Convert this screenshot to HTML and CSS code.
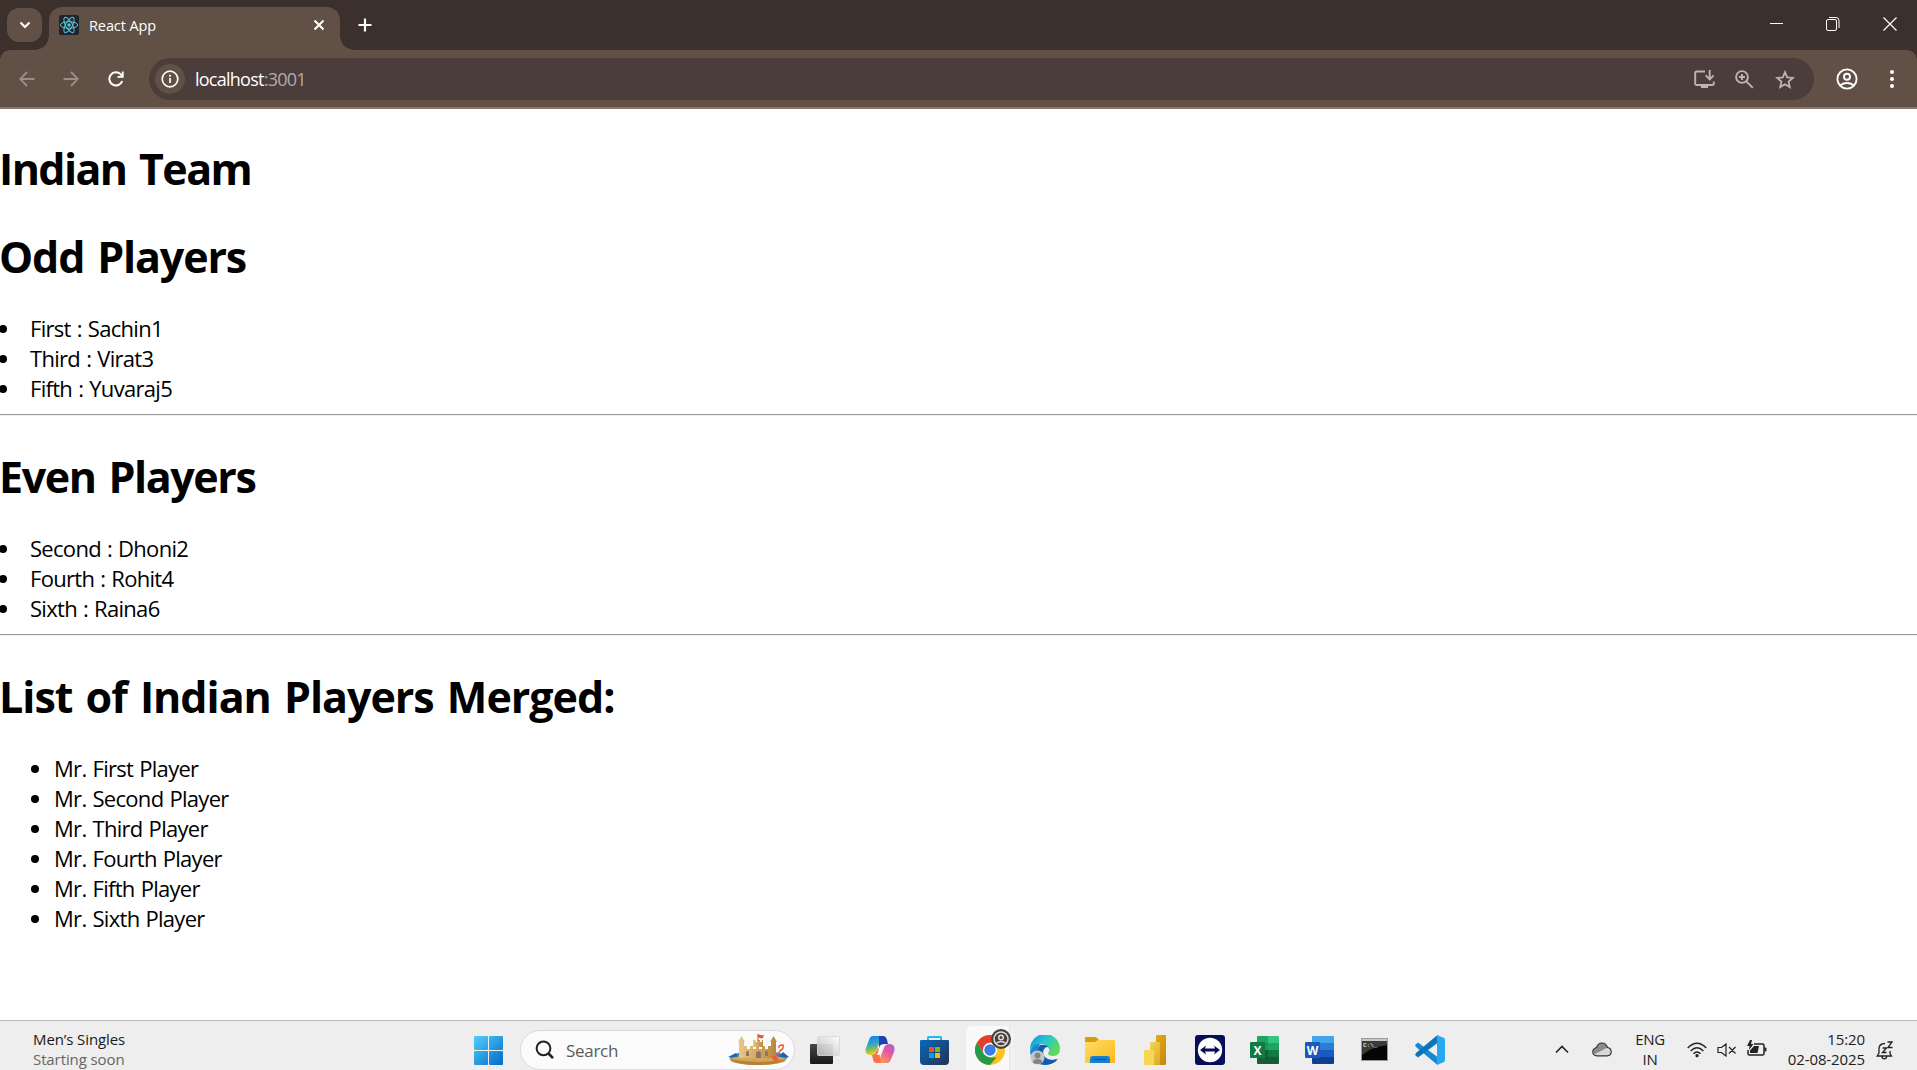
FILE: index.html
```html
<!DOCTYPE html>
<html lang="en">
<head>
<meta charset="utf-8">
<title>React App</title>
<link rel="stylesheet" href="styles.css">
</head>
<body>
<header class="tabstrip">
  <button class="tab-search" aria-label="Search tabs"><svg width="12" height="8" viewBox="0 0 12 8"><path d="M1.5 1.5 6 6l4.500-4.500" fill="none" stroke="#fff" stroke-width="2.200"/></svg></button>
  <div class="tab">
    <svg class="favicon" width="20" height="20" viewBox="0 0 20 20"><rect width="20" height="20" rx="2" fill="#222428"/><g fill="none" stroke="#58c4dc" stroke-width="1"><ellipse cx="10" cy="10" rx="8.600" ry="3.300"/><ellipse cx="10" cy="10" rx="8.600" ry="3.300" transform="rotate(60 10 10)"/><ellipse cx="10" cy="10" rx="8.600" ry="3.300" transform="rotate(120 10 10)"/></g><circle cx="10" cy="10" r="1.700" fill="#58c4dc"/></svg>
    <span class="tab-title">React App</span>
    <svg class="tab-close" width="12" height="12" viewBox="0 0 12 12"><path d="m1.500 1.500 9 9m0-9-9 9" stroke="#fff" stroke-width="2"/></svg>
  </div>
  <svg class="new-tab" width="14" height="14" viewBox="0 0 14 14"><path d="M7 .5v13M.5 7h13" stroke="#fff" stroke-width="2.200"/></svg>
  <div class="window-buttons">
    <svg width="14" height="14" viewBox="0 0 14 14"><path d="M1 6.500h13" stroke="#fff"/></svg>
    <svg width="14" height="14" viewBox="0 0 14 14"><path d="M3 .5h7A3 3 0 0 1 13 3.500V11" fill="none" stroke="#fff"/><rect x=".5" y="2.500" width="10" height="11" rx="1.500" fill="none" stroke="#fff"/></svg>
    <svg width="14" height="14" viewBox="0 0 14 14"><path d="m.5.5 13 13m0-13-13 13" stroke="#fff" stroke-width="1.200"/></svg>
  </div>
</header>
<nav class="toolbar">
  <svg class="nav-icon back" width="16" height="16" viewBox="0 0 16 16"><path d="M15.500 8H1.500M8 1 1.200 8 8 15" fill="none" stroke="#9b8c86" stroke-width="1.800"/></svg>
  <svg class="nav-icon forward" width="16" height="16" viewBox="0 0 16 16"><path d="M.5 8h14M8 1l6.800 7L8 15" fill="none" stroke="#9b8c86" stroke-width="1.800"/></svg>
  <svg class="nav-icon reload" width="16" height="16" viewBox="0 0 16 16"><path d="M14.200 10A6.600 6.600 0 1 1 12.800 3.400L14.600 5.500" fill="none" stroke="#fff" stroke-width="2"/><path d="M15.700.5v6.300H9.500V5h4.300V.5z" fill="#fff"/></svg>
  <div class="omnibox">
    <span class="site-info"><svg width="18" height="18" viewBox="0 0 18 18"><circle cx="9" cy="9" r="7.800" fill="none" stroke="#fff" stroke-width="1.700"/><path d="M9 8v5M9 4.800v1.900" stroke="#fff" stroke-width="1.700"/></svg></span>
    <span class="url"><span class="host">localhost</span><span class="port">:3001</span></span>
    <svg class="box-icon install" width="21" height="19" viewBox="0 0 21 19"><g fill="none" stroke="#bdb4b2" stroke-width="1.900"><path d="M11 1.500H2.500Q1.200 1.500 1.200 2.800v11q0 1.200 1.300 1.200h16q1.300 0 1.300-1.200V11.500M15.700 0v9M11.700 5.300l4 4 4-4"/></g><path d="M7 15h7v3H7z" fill="#bdb4b2"/></svg>
    <svg class="box-icon zoomed" width="19" height="19" viewBox="0 0 19 19"><g fill="none" stroke="#bdb4b2" stroke-width="1.900"><circle cx="7" cy="7" r="5.900"/><path d="m11.300 11.300 6.500 6.500M7 4v6M4 7h6"/></g></svg>
    <svg class="box-icon star" width="20" height="19" viewBox="0 0 20 19"><path d="m10 2.200 2.200 5.200 5.600.5-4.200 3.700 1.200 5.500-4.800-2.900-4.800 2.900 1.200-5.500-4.200-3.700 5.600-.5z" fill="none" stroke="#bdb4b2" stroke-width="1.800"/></svg>
  </div>
  <svg class="profile" width="22" height="22" viewBox="0 0 22 22"><g fill="none" stroke="#fff" stroke-width="1.900"><circle cx="11" cy="11" r="9.600"/><circle cx="11" cy="8.700" r="3"/><path d="M4.200 17.200q6.800-4.500 13.600 0"/></g></svg>
  <svg class="menu" width="6" height="20" viewBox="0 0 6 20"><g fill="#fff"><circle cx="3" cy="3" r="2"/><circle cx="3" cy="10" r="2"/><circle cx="3" cy="17" r="2"/></g></svg>
</nav>
<main class="page">
  <h1 class="heading"><span class="h-team">Indian Team</span></h1>
  <h1 class="heading"><span class="h-odd">Odd Players</span></h1>
  <ul class="players flush">
    <li>First : Sachin1</li>
    <li>Third : Virat3</li>
    <li>Fifth : Yuvaraj5</li>
  </ul>
  <hr class="rule">
  <h1 class="heading"><span class="h-even">Even Players</span></h1>
  <ul class="players flush">
    <li>Second : Dhoni2</li>
    <li>Fourth : Rohit4</li>
    <li>Sixth : Raina6</li>
  </ul>
  <hr class="rule">
  <h1 class="heading"><span class="h-merged">List of Indian Players Merged:</span></h1>
  <ul class="players">
    <li>Mr. First Player</li>
    <li>Mr. Second Player</li>
    <li>Mr. Third Player</li>
    <li>Mr. Fourth Player</li>
    <li>Mr. Fifth Player</li>
    <li>Mr. Sixth Player</li>
  </ul>
</main>
<footer class="taskbar">
  <div class="widget"><span class="w-title">Men’s Singles</span><span class="w-sub">Starting soon</span></div>
  <div class="apps">
    <svg class="start" width="29" height="29" viewBox="0 0 29 29"><defs><linearGradient id="win" gradientUnits="userSpaceOnUse" x1="0" y1="0" x2="29" y2="29"><stop stop-color="#4fd0fb"/><stop offset="1" stop-color="#0369c9"/></linearGradient></defs><g fill="url(#win)"><rect width="14" height="14" rx="1"/><rect x="15" width="14" height="14" rx="1"/><rect y="15" width="14" height="14" rx="1"/><rect x="15" y="15" width="14" height="14" rx="1"/></g></svg>
    <div class="search">
      <svg width="20" height="20" viewBox="0 0 20 20"><circle cx="8.500" cy="8.300" r="6.900" fill="none" stroke="#222" stroke-width="2"/><path d="m13.500 13.500 4.500 4.700" stroke="#222" stroke-width="2.600"/></svg>
      <span class="search-label">Search</span>
      <svg class="castle" width="61" height="32" viewBox="0 0 61 32"><defs><linearGradient id="sand" x2="1"><stop stop-color="#e8c98a"/><stop offset="1" stop-color="#b8873c"/></linearGradient></defs><path d="M1 24q8-7 18-6h24q12 0 17 6l-9 4H8z" fill="#2b8bd0"/><path d="M0 23l8-4 2 4zM50 23l5-5 6 5z" fill="#1c65ad"/><ellipse cx="30" cy="26" rx="28" ry="5" fill="#d3a65b"/><path d="M2 25q28 6 56 0-6 6-28 6T2 25" fill="#b6803b"/><g fill="url(#sand)"><path d="M11 24V7h5v5h3v3h3v-3h3v3h3v-3h3v3h3v-3h3v3h3v-3h3V7h5v17z"/><path d="M25 13V6h2.500v2h2V6H32v2h2V6h1v7z"/><path d="m10 8 3.500-6L17 8zM42 8l3.500-6L49 8z"/></g><path d="M28 24v-5q2.500-4 5 0v5zM18 22v-4q1.500-2 3 0v4zM37 22v-4q1.500-2 3 0v4z" fill="#907366"/><path d="M30 7V0" stroke="#a85c35"/><path d="M30 0q3 2 6 1l-1 3q-2 1-5-1z" fill="#f25128"/><path d="m46 24 7-8" stroke="#ed5a32" stroke-width="1.500"/><path d="M44 22l5 1 2 3-4 1q-3-1-3-5z" fill="#f25b31"/><path d="M51 14q-1-3 4-3 1 5-3 5" fill="none" stroke="#ed5a32" stroke-width="1.500"/></svg>
    </div>
    <div class="pinned">
      <svg class="app" width="30" height="30" viewBox="0 0 30 30"><defs><linearGradient id="tv" x2="0" y2="1"><stop stop-color="#484846"/><stop offset="1" stop-color="#181818"/></linearGradient><linearGradient id="tw" x1="1" x2="0" y2="1"><stop stop-color="#fff"/><stop offset="1" stop-color="#bdbdbc"/></linearGradient></defs><rect y="9" width="23" height="20" rx="1" fill="url(#tv)"/><rect x="7.500" y="1.500" width="22" height="19" rx="1" fill="url(#tw)" stroke="#d9d9d9" opacity=".93"/></svg>
      <svg class="app" width="30" height="30" viewBox="0 0 30 30"><defs><linearGradient id="c1" x2=".2" y2="1"><stop stop-color="#1684e2"/><stop offset=".4" stop-color="#2b9dd5"/><stop offset=".7" stop-color="#73bd65"/><stop offset="1" stop-color="#f3cc22"/></linearGradient><linearGradient id="c2" x1="1" x2=".2" y2="1"><stop stop-color="#a55bdf"/><stop offset=".45" stop-color="#e65a9b"/><stop offset="1" stop-color="#ffa34f"/></linearGradient></defs><path d="M8 1h11q-3 1-4 5l-4 10q-1 5-6 4Q-1 19 1 13L4 5q1-4 4-4z" fill="url(#c1)"/><path d="M14 1h4q3 0 4 4l1 4h-4q-4 0-5 4z" fill="#1f3fb5"/><path d="M22 28H11q3-1 4-5l4-10q1-4 6-4 6 1 4 8l-3 7q-1 4-4 4z" fill="url(#c2)"/><path d="M16 28h-4q-4 0-4-4l-1-4q3 0 4-3l2-5z" fill="#ff7045"/><path d="m16 10-4 10h2l4-10z" fill="#fff"/></svg>
      <svg class="app" width="30" height="30" viewBox="0 0 30 30"><defs><linearGradient id="st" x2="1" y2="1"><stop stop-color="#0669bb"/><stop offset="1" stop-color="#243253"/></linearGradient></defs><path d="M8 7V2.500q0-.5.600-.5h11.800q.600 0 .6.500V7" fill="none" stroke="#23b8ec" stroke-width="2"/><path d="M0 6q0-1 1-1h27q1 0 1 1v20q0 4-4 4H4q-4 0-4-4z" fill="url(#st)"/><path d="M9 12h5v5H9z" fill="#f25022"/><path d="M15 12h5v5h-5z" fill="#7fba00"/><path d="M9 18h5v5H9z" fill="#00a4ef"/><path d="M15 18h5v5h-5z" fill="#ffb900"/></svg>
      <div class="app active"><svg width="36" height="36" viewBox="0 -6 36 36"><circle cx="15" cy="15" r="15" fill="#fcc31e"/><path d="M2 7.500A15 15 0 0 1 28 7.500H15L8.500 18.800z" fill="#e43e31"/><path d="M2 7.500 8.500 18.800 15 22.500h6.500L15 30A15 15 0 0 1 2 7.500z" fill="#259b49"/><circle cx="15" cy="15" r="7.200" fill="#fff"/><circle cx="15" cy="15" r="5.700" fill="#397de9"/><circle cx="26" cy="4" r="10" fill="#4a403d"/><g fill="none" stroke="#e2dcda" stroke-width="1.500"><circle cx="26" cy="4" r="7"/><circle cx="26" cy="2.500" r="2.300"/><path d="M21 8.500q5-4 10 0"/></g></svg></div>
      <svg class="app" width="30" height="30" viewBox="0 0 30 30"><defs><linearGradient id="e1" x2="1" y2=".6"><stop stop-color="#108ddb"/><stop offset=".5" stop-color="#28c5d3"/><stop offset="1" stop-color="#61da57"/></linearGradient><linearGradient id="e2" x2="1" y2="1"><stop stop-color="#1799df"/><stop offset="1" stop-color="#0b4a9e"/></linearGradient></defs><path d="M0 15A15 15 0 0 1 30 13q0 8-7 8-5 0-5-3 2-1 1-4-2-5-8-5Q3 9 0 15z" fill="url(#e1)"/><path d="M0 16Q3 8 10 9q-2 3-1 8 2 8 11 8 4 0 7-1-5 6-12 6A15 15 0 0 1 0 16z" fill="url(#e2)"/><path d="M10 10q-4 6-1 12 4 7 12 7 4-1 7-5-8 3-13-2-4-5 0-9 2-2 4 0-2-4-9-3z" fill="#125bae"/><circle cx="7.500" cy="22.500" r="7" fill="#c6c6c6"/><circle cx="7.500" cy="20.500" r="3" fill="#858585"/><path d="M3 28v-1q0-3 4.500-3t4.500 3v1q-4 2-9 0z" fill="#858585"/></svg>
      <svg class="app" width="30" height="30" viewBox="0 0 30 30"><defs><linearGradient id="fo" x2="1" y2="1"><stop stop-color="#ffdc69"/><stop offset="1" stop-color="#fcb917"/></linearGradient></defs><path d="M0 9V3q0-1 1-1h9q1 0 2 1l2 2-4 5z" fill="#d99b09"/><path d="M0 7h10l3-2h16q1 0 1 1v21q0 1-1 1H1q-1 0-1-1z" fill="url(#fo)"/><path d="M5 28v-4q0-3 3-3h14q3 0 3 3v4z" fill="#1680d3"/><path d="M8.500 24.500h13" stroke="#0859a5" stroke-width="1.400"/></svg>
      <svg class="app" width="30" height="30" viewBox="0 0 30 30"><defs><linearGradient id="p1" x2=".7" y2="1"><stop stop-color="#e5aa12"/><stop offset="1" stop-color="#c98a10"/></linearGradient><linearGradient id="p2" x2=".7" y2="1"><stop stop-color="#f4d35e"/><stop offset="1" stop-color="#dfae26"/></linearGradient></defs><rect x="16" width="10" height="30" rx="1" fill="url(#p1)"/><rect x="10" y="7" width="10" height="23" rx="1" fill="url(#p2)"/><rect x="4" y="15" width="10" height="15" rx="1" fill="#f6d751"/></svg>
      <svg class="app" width="30" height="30" viewBox="0 0 30 30"><rect width="30" height="30" rx="3" fill="#080d57"/><circle cx="15" cy="15" r="12.200" fill="#fff"/><path d="m5 15 6-4.500-1 3h10l-1-3 6 4.500-6 4.500 1-3H10l1 3z" fill="#080d57"/></svg>
      <svg class="app" width="30" height="30" viewBox="0 0 30 30"><path d="M7 2q0-1 1-1h10v7H7z" fill="#21a366"/><path d="M18 1h10q1 0 1 1v6H18z" fill="#33c481"/><path d="M7 8h11v7H7z" fill="#1c9457"/><path d="M18 8h11v7H18z" fill="#21a366"/><path d="M7 15h11v7H7z" fill="#185c37"/><path d="M18 15h11v7H18z" fill="#107c41"/><path d="M7 22h22v6q0 1-1 1H8q-1 0-1-1z" fill="#185c37"/><rect y="7" width="15" height="16" rx="1" fill="#107c41"/><text class="office" x="7.500" y="19.500">X</text></svg>
      <svg class="app" width="30" height="30" viewBox="0 0 30 30"><path d="M7 2q0-1 1-1h20q1 0 1 1v6H7z" fill="#41a5ee"/><path d="M7 8h22v7H7z" fill="#2b7cd3"/><path d="M7 15h22v7H7z" fill="#185abd"/><path d="M7 22h22v6q0 1-1 1H8q-1 0-1-1z" fill="#103f91"/><rect y="7" width="15" height="16" rx="1" fill="#185abd"/><text class="office" x="7.500" y="19.500">W</text></svg>
      <svg class="app" width="30" height="30" viewBox="0 0 30 30"><rect x="1.500" y="3.500" width="26" height="22" fill="#050505" stroke="#9a9a9a"/><path d="M2 4h25v2H2z" fill="#c8c8c8"/><path d="M2 6h25v4Q12 12 2 20z" fill="#3b3b3b"/><text class="prompt" x="3" y="12">C:\_</text></svg>
      <svg class="app" width="30" height="30" viewBox="0 0 30 30"><path d="M0 10 3 7.500 22.500 22v8L1 12z" fill="#1689d1"/><path d="M0 20 3 22.500 22.500 8V0L1 18z" fill="#0876b9"/><path d="m22 0 7 3q1 .5 1 2v20q0 1.500-1 2l-7 3z" fill="#28a8ee"/></svg>
    </div>
  </div>
  <div class="tray">
    <svg class="t-chevron" width="14" height="9" viewBox="0 0 14 9"><path d="m1 7.500 6-6 6 6" fill="none" stroke="#222" stroke-width="1.600"/></svg>
    <svg class="t-cloud" width="20" height="15" viewBox="0 0 20 15"><path d="M5 13.800Q.8 13.500.8 9.700 1 6.300 4.500 5.500 6 1 10 1t5.500 4.500Q19.200 6 19.200 9.800q-.2 4-4.200 4z" fill="#d8d8d8"/><path d="M1 10q0-4 3.500-4.500Q6 1 10 1t5.500 4.500L3 12z" fill="#8b8b8b"/><path d="M5 13.800Q.8 13.500.8 9.700 1 6.300 4.500 5.500 6 1 10 1t5.500 4.500Q19.200 6 19.200 9.800q-.2 4-4.200 4z" fill="none" stroke="#333" stroke-width="1.200"/></svg>
    <div class="lang"><span>ENG</span><span>IN</span></div>
    <svg class="t-wifi" width="20" height="16" viewBox="0 0 20 16"><g fill="none" stroke="#222" stroke-width="1.400"><path d="M.7 6q9.300-9.500 18.600 0M3.600 9q6.400-6.300 12.800 0M6.500 11.800q3.500-3.500 7 0"/></g><circle cx="10" cy="13.700" r="1.600" fill="#222"/></svg>
    <svg class="t-sound" width="20" height="14" viewBox="0 0 20 14"><path d="M1 4.500h3.500L9 1v12L4.500 9.500H1zM12 4l6.500 6.500m0-6.500L12 10.500" fill="none" stroke="#222" stroke-width="1.200"/></svg>
    <svg class="t-battery" width="21" height="17" viewBox="0 0 21 17"><path d="M8 4h8.500q1.500 0 1.500 1.500v8q0 1.500-1.500 1.500h-13Q2 15 2 13.500V10" fill="none" stroke="#222" stroke-width="1.500"/><path d="M4 13V10.500L8 6h5l-1.500 7zM18.500 7.500h1q1 0 1 1v2q0 1-1 1h-1zM4 0 1 6h2.500L3 10l4.500-6H5L6 0z" fill="#222"/></svg>
    <div class="clock"><span class="time">15:20</span><span class="date">02-08-2025</span></div>
    <svg class="t-bell" width="18" height="19" viewBox="0 0 18 19"><g fill="none" stroke="#222" stroke-width="1.300"><path d="M9 2.500Q3 2.500 3 8v4l-1.800 3H15.500L14 12.500V10M6 15.500q0 2.300 2.300 2.300t2.300-2.300"/><path d="M11.500 1H16l-4 5.500h4.500M6.500 7h4l-4 4.500h4"/></g></svg>
  </div>
</footer>
</body>
</html>
```
FILE: styles.css
```css
* { box-sizing: border-box; }
html, body { height: 100%; }
body {
  margin: 0;
  display: flex;
  flex-direction: column;
  overflow: hidden;
  background: #fff;
  color: #000;
  font-family: "Open Sans", "Noto Sans", sans-serif;
}
svg { display: block; flex: none; }
span { white-space: nowrap; }

/* Tab strip */
.tabstrip {
  flex: none;
  height: 50px;
  padding-left: 7px;
  display: flex;
  align-items: flex-start;
  background: #3c302c;
}
.tab-search {
  width: 35px;
  height: 34px;
  margin: 8px 7px 0 0;
  padding: 0;
  border: 0;
  border-radius: 12px;
  background: #615045;
  display: flex;
  align-items: center;
  justify-content: center;
}
.tab {
  position: relative;
  width: 291px;
  height: 43px;
  margin-top: 7px;
  padding: 0 15px 7px 10px;
  display: flex;
  align-items: center;
  border-radius: 13px 13px 0 0;
  background: #615045;
}
.tab::before, .tab::after {
  content: "";
  position: absolute;
  bottom: 0;
  width: 14px;
  height: 14px;
}
.tab::before { left: -14px; background: radial-gradient(circle at 0 0, transparent 13.5px, #615045 14px); }
.tab::after { right: -14px; background: radial-gradient(circle at 100% 0, transparent 13.5px, #615045 14px); }
.tab-title { margin-left: 10px; font-size: 14.5px; letter-spacing: -0.1px; color: #fff; }
.tab-close { margin-left: auto; }
.new-tab { margin: 18px 0 0 18px; }
.window-buttons { margin: 17px 20px 0 auto; display: flex; gap: 43px; }

/* Toolbar */
.toolbar {
  flex: none;
  height: 59px;
  display: flex;
  align-items: center;
  padding: 0 22px 0 19px;
  border-bottom: 2px solid #8d756c;
  background:
    radial-gradient(circle at 10px 10px, transparent 9.5px, #3c302c 10px) 0 0 / 10px 10px no-repeat,
    radial-gradient(circle at 0 10px, transparent 9.5px, #3c302c 10px) 100% 0 / 10px 10px no-repeat,
    #615045;
}
.forward { margin-left: 28px; }
.reload { margin-left: 29px; }
.omnibox {
  flex: 1;
  height: 42px;
  margin: 1px 22px 0 25px;
  padding: 0 19px 0 6px;
  display: flex;
  align-items: center;
  border-radius: 21px;
  background: #4b3d3a;
}
.site-info {
  width: 30px;
  height: 30px;
  border-radius: 50%;
  background: #615045;
  display: flex;
  align-items: center;
  justify-content: center;
}
.url { margin-left: 10px; font-size: 18px; letter-spacing: -0.75px; color: #fff; }
.port { color: #b5aaa7; }
.install { margin-left: auto; }
.zoomed { margin-left: 20px; }
.star { margin-left: 21px; }
.menu { margin-left: 31px; }

/* Page content */
.page { flex: 1; min-height: 0; padding-top: 30px; }
.heading { margin: 0 0 28px -1px; font-size: 43px; line-height: 60px; font-weight: 700; word-spacing: 3px; }
.h-team { letter-spacing: -1.6px; }
.h-odd { letter-spacing: -1.15px; }
.h-even { letter-spacing: -1.4px; }
.h-merged { letter-spacing: -1.02px; }
.players { margin: -2px 0 0; padding: 0 0 0 54px; font-size: 22px; line-height: 30px; letter-spacing: -0.7px; word-spacing: 1px; }
.players li { list-style: none; position: relative; }
.players li::before {
  content: "";
  position: absolute;
  left: -23px;
  top: 12px;
  width: 8px;
  height: 8px;
  border-radius: 50%;
  background: #000;
}
.flush { padding-left: 30px; }
.flush li::before { left: -31px; }
.rule { height: 2px; margin: 11px 0 31px; border: 0; border-top: 1px solid #9a9a9a; border-bottom: 1px solid #eee; }

/* Taskbar */
.taskbar {
  flex: none;
  height: 50px;
  display: flex;
  border-top: 1px solid #bbb;
  background: #eee;
  overflow: hidden;
}
.widget { width: 474px; padding: 8px 0 0 33px; display: flex; flex-direction: column; font-size: 15px; line-height: 20px; letter-spacing: -0.1px; color: #1b1b1b; }
.w-sub { color: #666; }
.apps { display: flex; }
.start { margin-top: 15px; }
.search {
  width: 275px;
  height: 40px;
  margin: 9px 15px 0 17px;
  padding: 0 5px 0 14px;
  display: flex;
  align-items: center;
  border: 1px solid #dadada;
  border-radius: 20px;
  background: #fbfbfb;
}
.search-label { margin-left: 11px; font-size: 17px; letter-spacing: -0.3px; color: #5c5c5c; }
.castle { margin-left: auto; }
.pinned { display: flex; gap: 25px; }
.app { margin-top: 14px; width: 30px; flex: none; }
.active {
  width: 48px;
  height: 44px;
  margin: 5px -9px 0;
  padding: 3px 0 0 9px;
  border-radius: 6px 6px 0 0;
  background: linear-gradient(90deg, #f9f9f9 43px, #e2e2e2 43px, #f2f2f2 45px);
}
.office { font: 700 12px "Open Sans", sans-serif; fill: #fff; text-anchor: middle; }
.prompt { font: 700 6px "Liberation Mono", monospace; fill: #ddd; }
.tray { flex: 1; display: flex; align-items: flex-start; padding-left: 110px; color: #222; font-size: 15px; line-height: 20px; letter-spacing: -0.3px; }
.t-chevron { margin-top: 24px; }
.t-cloud { margin: 21px 0 0 23px; }
.lang { width: 30px; margin: 8px 0 0 23px; display: flex; flex-direction: column; align-items: center; }
.t-wifi { margin: 21px 0 0 22px; }
.t-sound { margin: 22px 0 0 10px; }
.t-battery { margin: 19px 0 0 9px; }
.clock { width: 98px; margin-top: 8px; display: flex; flex-direction: column; align-items: flex-end; letter-spacing: -0.1px; }
.t-bell { margin: 20px 0 0 11px; }
```
